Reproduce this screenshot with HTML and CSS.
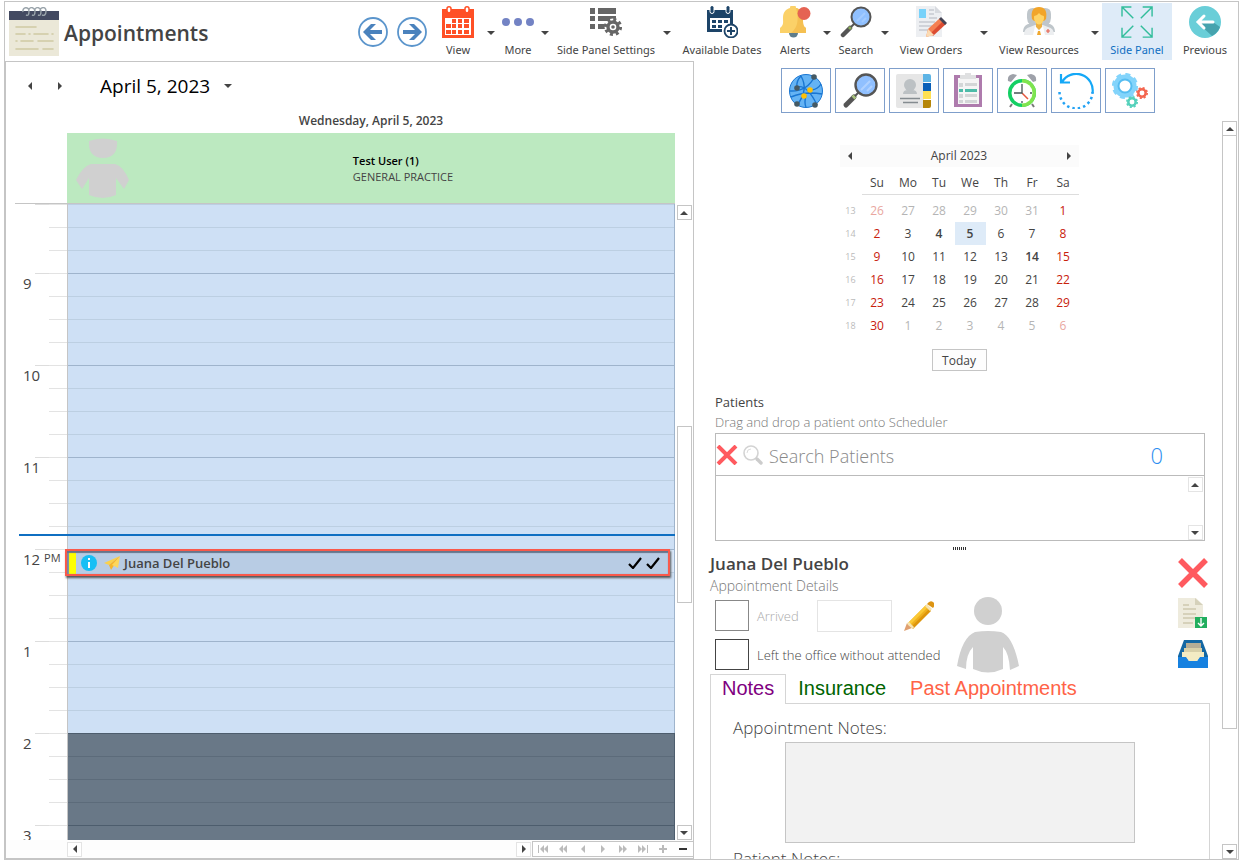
FILE: index.html
```html
<!DOCTYPE html>
<html lang="en">
<head>
<meta charset="utf-8">
<title>Appointments</title>
<link rel="stylesheet" href="styles.css">
</head>
<body>
<div class="app">
  <header class="header">
    <div class="brand">
      <svg class="brand-icon" viewBox="0 0 50 50" aria-hidden="true">
        <path fill="#ebe8d8" d="M0 4h50v45H0z"/><path fill="#434a61" d="M0 4h50v9H0z"/>
        <path fill="none" stroke="#9aa4ab" stroke-width="1.4" d="M14 5c-1-5 6-6 6-1 0 4-1 5-3 4M20 4c-1-4 5-5 6 0 0 4-1 5-3 4M26 4c-1-4 5-5 6 0 0 4-1 5-3 4M31 4c0-4 6-5 6 0 0 4-2 5-4 4"/>
        <path fill="none" stroke="#cfc9a3" stroke-width="1.6" stroke-linecap="round" d="M7 20h20M7 27h9M20 27h1M25 27h14M43 27h1M7 34h1M12 34h12M29 34h15M7 42h22M34 42h10"/>
      </svg>
      <h1>Appointments</h1>
    </div>
    <nav class="history">
      <button class="round" aria-label="Back"><svg viewBox="0 0 30 30"><circle cx="15" cy="15" r="14" fill="#fff" stroke="#5b95cc" stroke-width="1.8"/><path fill="none" stroke="#4a82bd" stroke-width="4" d="M24 15H8"/><path fill="#4a82bd" d="M5 15l8-8h5l-8 8 8 8h-5z"/></svg></button>
      <button class="round" aria-label="Forward"><svg viewBox="0 0 30 30"><circle cx="15" cy="15" r="14" fill="#fff" stroke="#5b95cc" stroke-width="1.8"/><path fill="none" stroke="#4a82bd" stroke-width="4" d="M6 15h16"/><path fill="#4a82bd" d="M25 15l-8-8h-5l8 8-8 8h5z"/></svg></button>
    </nav>
    <div class="toolbar">
      <button class="tool"><svg viewBox="0 0 32 32"><path fill="#ff5026" d="M0 3h32v29H0z"/><path fill="#fff" d="M3 12h26v17H3z"/><path fill="#ff5026" d="M10 13h4v4h-4zM16 13h4v4h-4zM22 13h5v4h-5zM4 18h5v4H4zM10 18h4v4h-4zM16 18h4v4h-4zM22 18h5v4h-5zM4 24h5v4H4zM10 24h4v4h-4zM16 24h4v4h-4zM22 24h5v4h-5z"/><g fill="#fff" stroke="#ff5026" stroke-width="1.500"><rect x="5" y=".8" width="4" height="6" rx="2"/><rect x="23" y=".8" width="4" height="6" rx="2"/></g></svg><span>View</span></button>
      <button class="caret" aria-label="View options"></button>
      <button class="tool"><svg viewBox="0 0 32 32"><g fill="#7383c4"><circle cx="4" cy="16" r="4"/><circle cx="16" cy="16" r="4"/><circle cx="28" cy="16" r="4"/></g></svg><span>More</span></button>
      <button class="caret" aria-label="More options"></button>
      <button class="tool"><svg viewBox="0 0 32 32"><path fill="#666" d="M0 2h5v6H0zM8 2h18v6H8zM0 10h5v5H0zM8 10h18v5H8zM0 18h5v5H0zM8 18h8v5H8z"/><circle cx="23" cy="21" r="8.500" fill="#fff"/><circle cx="23" cy="21" r="5" fill="none" stroke="#666" stroke-width="3.400"/><circle cx="23" cy="21" r="7.600" fill="none" stroke="#666" stroke-width="3" stroke-dasharray="3 2.969"/><circle cx="23" cy="21" r="1.800" fill="#666"/></svg><span>Side Panel Settings</span></button>
      <button class="caret" aria-label="Side panel settings options"></button>
      <button class="tool"><svg viewBox="0 0 32 32"><path fill="#1d4468" d="M1 4h26v16h-3v-8H4v11h12v3H1z"/><g fill="#1d4468" stroke="#fff"><rect x="4" y="-.5" width="4" height="8" rx="2"/><rect x="20" y="-.5" width="4" height="8" rx="2"/></g><path fill="#1d4468" d="M6 14h4v3H6zM12 14h4v3h-4zM18 14h4v3h-4zM6 19h4v3H6zM12 19h4v3h-4z"/><circle cx="25" cy="25" r="6.500" fill="#fff" stroke="#1d4468" stroke-width="1.800"/><path stroke="#1d4468" stroke-width="2" d="M21 25h8M25 21v8"/></svg><span>Available Dates</span></button>
      <button class="tool"><svg viewBox="0 0 32 32"><path fill="#5f7d8c" d="M10 27h9a4.500 4.500 0 0 1-9 0z"/><path fill="#fbd168" d="M11 2a3 3 0 0 1 6 0c5 1 7 5 7 10 0 6 0 8 3 10v5H1v-5c4-3 3-6 3-10C4 6 7 3 11 2z"/><path fill="#f5c052" d="M17 2c5 1 7 5 7 10 0 6 0 8 3 10v5H12q10-8 5-25z"/><circle cx="25" cy="7.500" r="6.500" fill="#e56353"/></svg><span>Alerts</span></button>
      <button class="caret" aria-label="Alerts options"></button>
      <button class="tool"><svg viewBox="0 0 32 32"><path stroke="#555" stroke-width="4.500" stroke-linecap="round" d="M3 29l7-7"/><path stroke="#8bab59" stroke-width="3" d="M9 23l2-2"/><path stroke="#555" stroke-width="2" d="M11 21l4-4"/><circle cx="21" cy="11" r="9.500" fill="#90c0ff" stroke="#555" stroke-width="2"/><path stroke="#a3cbff" stroke-width="2" d="M17 15l8-8M22 16l4-4"/></svg><span>Search</span></button>
      <button class="caret" aria-label="Search options"></button>
      <button class="tool"><svg viewBox="0 0 32 32"><path fill="#edeff2" d="M1 0h19l7 7v24H1z"/><path fill="#d7dadf" d="M20 0v7h7z"/><path fill="#78d2fa" d="M4 3h7v9H4z"/><path stroke="#c6cad1" stroke-width="1.500" d="M14 4h5M14 8h5M14 12h8M4 16h16M4 20h13M4 24h10"/><path fill="#f58053" d="M11 31l2-8 12-11 5 5-12 12z"/><path fill="#dc4c32" d="M16 27L28 15l3 3-13 12z"/><path fill="#fbdbb3" d="M11 31l2-8 6 6z"/><path fill="#445" d="M24 13l2-2 6 6-2 2z"/></svg><span>View Orders</span></button>
      <button class="caret" aria-label="View orders options"></button>
      <button class="tool"><svg viewBox="0 0 32 32"><g fill="#bfc6cb"><path d="M4 8q0-6 6-6t6 6v4q0 4-4 7H7q-3-3-3-7zM16 8q0-6 6-6t6 6v4q0 4-3 7h-5q-4-3-4-7z"/><path d="M0 26q0-6 5-8h22q5 2 5 8z"/></g><path fill="#eceef0" d="M1 29q0-7 6-8l5-2h8l5 2q6 1 6 8z"/><path fill="#f2a52a" d="M9 13Q7 1 16 1t7 12l-2 2H11z"/><path fill="#eeb040" d="M13 16h6v5l-3 3-3-3z"/><ellipse cx="16" cy="12" rx="5" ry="6.500" fill="#ffd466"/><path fill="#f2a52a" d="M10 10q0-6 6-6t6 6q-4 0-6-3-2 3-6 3z"/><path fill="#fff" d="M12 20l4 5 4-5 2 9H10z"/><path fill="#f0a830" d="M15 25h2l1 4h-4z"/><path stroke="#e86352" stroke-width="1.200" d="M25 23v4M23 25h4"/></svg><span>View Resources</span></button>
      <button class="caret caret-end" aria-label="View resources options"></button>
      <button class="tool active"><svg viewBox="0 0 32 32"><path fill="none" stroke="#31bd9b" stroke-width="1.500" d="M0 10V0h10M0 0l12 12M22 0h10v10M32 0L20 12M0 22v10h10M0 32l12-12M22 32h10V22M32 32L20 20" transform="translate(1 1) scale(.94)"/></svg><span>Side Panel</span></button>
      <button class="tool"><svg viewBox="0 0 32 32"><circle cx="16" cy="16" r="16" fill="#69ced8"/><path fill="#46a3ae" d="M9 17l14 13a16 16 0 0 0 8-9l-7-5z"/><path fill="none" stroke="#fff" stroke-width="3" stroke-linecap="round" d="M24 16H10M15 10l-6 6 6 6"/></svg><span>Previous</span></button>
    </div>
  </header>

  <main class="main">
    <section class="schedule">
      <div class="date-nav">
        <button class="arrow-btn left" aria-label="Previous day"></button>
        <button class="arrow-btn right" aria-label="Next day"></button>
        <button class="date-pick">April 5, 2023 <i class="tri down"></i></button>
      </div>
      <h2 class="day-title">Wednesday, April 5, 2023</h2>
      <div class="resource">
        <svg class="resource-avatar" viewBox="0 0 53 62" aria-hidden="true"><path fill="#d0d0d0" d="M13 4Q27-1 41 4q1 17-14 17T13 4zM15 27h24q8 2 14 16l-5 9-8-11v17q-13 6-27 0V41L6 52 0 43q7-14 15-16z"/></svg>
        <div class="resource-text"><strong>Test User (1)</strong><span>GENERAL PRACTICE</span></div>
      </div>
      <div class="timeline">
        <div class="hours">
          <div class="hour partial"><div class="label"></div><div class="slots"><i></i><i></i><i></i></div></div>
          <div class="hour"><div class="label">9</div><div class="slots"><i></i><i></i><i></i><i></i></div></div>
          <div class="hour"><div class="label">10</div><div class="slots"><i></i><i></i><i></i><i></i></div></div>
          <div class="hour now"><div class="label">11</div><div class="slots"><i></i><i></i><i></i><i></i></div></div>
          <div class="hour"><div class="label">12 <small>PM</small></div><div class="slots"><i class="picked"></i><i></i><i></i><i></i></div>
            <button class="event">
              <svg class="ev-info" viewBox="0 0 16 16"><circle cx="8" cy="8" r="8" fill="#17bff5"/><path stroke="#fff" stroke-width="2" d="M8 7v6M8 3v2"/></svg>
              <svg class="ev-plane" viewBox="0 0 16 14"><path fill="#fbd14b" d="M16 0L0 7l5 2z"/><path fill="#f5b52a" d="M16 0L5 9l2 5 2-3z"/><path fill="#fcd65c" d="M16 0L8 9l6 3z"/></svg>
              <span class="ev-name">Juana Del Pueblo</span>
              <svg class="ev-check" viewBox="0 0 14 12"><path fill="none" stroke="#000" stroke-width="2.200" d="M1 7l4 4L13 1"/></svg>
              <svg class="ev-check" viewBox="0 0 14 12"><path fill="none" stroke="#000" stroke-width="2.200" d="M1 7l4 4L13 1"/></svg>
            </button>
          </div>
          <div class="hour"><div class="label">1</div><div class="slots"><i></i><i></i><i></i><i></i></div></div>
          <div class="hour closed"><div class="label">2</div><div class="slots"><i></i><i></i><i></i><i></i></div></div>
          <div class="hour closed"><div class="label">3</div><div class="slots"><i></i><i></i><i></i><i></i></div></div>
        </div>
        <div class="vbar">
          <button class="sb" aria-label="Scroll up"><i class="tri up"></i></button>
          <div class="track track-day"><div class="thumb"></div></div>
          <button class="sb" aria-label="Scroll down"><i class="tri down"></i></button>
        </div>
      </div>
      <div class="hbar">
        <button class="sb soft" aria-label="Scroll left"><i class="tri left"></i></button>
        <button class="sb soft push" aria-label="Scroll right"><i class="tri right"></i></button>
        <div class="pager">
          <button aria-label="First"><svg viewBox="0 0 12 10"><path d="M1 1h1v8H1zM7 1v8L3 5zM11 1v8L7 5z"/></svg></button>
          <button aria-label="Previous page"><svg viewBox="0 0 12 10"><path d="M6 1v8L2 5zM10 1v8L6 5z"/></svg></button>
          <button aria-label="Previous resource"><svg viewBox="0 0 12 10"><path d="M8 1v8L4 5z"/></svg></button>
          <button aria-label="Next resource"><svg viewBox="0 0 12 10"><path d="M4 1v8l4-4z"/></svg></button>
          <button aria-label="Next page"><svg viewBox="0 0 12 10"><path d="M2 1v8l4-4zM6 1v8l4-4z"/></svg></button>
          <button aria-label="Last"><svg viewBox="0 0 12 10"><path d="M1 1v8l4-4zM5 1v8l4-4zM10 1h1v8h-1z"/></svg></button>
          <button aria-label="Add"><svg viewBox="0 0 12 10"><path d="M2 4h8v2H2zM5 1h2v8H5z"/></svg></button>
          <button class="on" aria-label="Remove"><svg viewBox="0 0 12 10"><path d="M2 4h8v2H2z"/></svg></button>
        </div>
      </div>
    </section>

    <aside class="side">
      <div class="side-tools">
        <button aria-label="Network"><svg viewBox="0 0 36 36"><circle cx="18" cy="18" r="16.500" fill="#64b3f4" stroke="#1976d2"/><path fill="none" stroke="#1976d2" stroke-width="1.400" d="M2 18q17 1 25-15M9 14q10-3 20 18M3 24q14-6 31-3M13 3q8 14-4 29M24 17q6-1 9-6M9 14Q8 8 13 3M18 22q-2 8 0 12"/><g fill="#455a64"><circle cx="26" cy="4" r="2.800"/><circle cx="9" cy="15" r="2.800"/><circle cx="9" cy="31" r="2.800"/><circle cx="27" cy="32" r="2.800"/></g><g fill="#ffc107"><circle cx="22" cy="17" r="2.800"/><circle cx="16" cy="23" r="2.800"/></g></svg></button>
        <button aria-label="Find"><svg viewBox="0 0 36 36"><path stroke="#555" stroke-width="5" stroke-linecap="round" d="M4 32l8-8"/><path stroke="#a9c37d" stroke-width="4" d="M11 25l2-2"/><path stroke="#555" stroke-width="2" d="M13 23l5-5"/><circle cx="24" cy="12" r="10.500" fill="#90c0ff" stroke="#555" stroke-width="2.400"/><path stroke="#b0d1ff" stroke-width="2" d="M19 17l9-9M25 18l5-5"/></svg></button>
        <button aria-label="Contacts"><svg viewBox="0 0 36 36"><rect x="0" y="1" width="28" height="34" rx="2" fill="#e6e6e6"/><path fill="#5db4e5" d="M27 1h6q2 0 2 2v6h-8z"/><path fill="#0a5fb8" d="M27 10h8v8h-8z"/><path fill="#ffe053" d="M27 18h8v8h-8z"/><path fill="#b58609" d="M27 27h8v6q0 2-2 2h-6z"/><circle cx="14" cy="12" r="6" fill="#bcc1c4"/><path fill="#bcc1c4" d="M7 21q0-4 5-4h4q5 0 5 4z"/><path stroke="#848b90" stroke-width="1.300" d="M4 25.500h20M7 29.500h15"/></svg></button>
        <button aria-label="Task list"><svg viewBox="0 0 36 36"><path fill="#ae7bad" d="M4 2h28v32H4z"/><path fill="#f5f5f5" d="M8 5h21v26H8z"/><path fill="#dfe0e1" d="M10 2h5V0h6v2h5v4H10z"/><path fill="#d3d6d7" d="M9 10h4v4H9zM15 10h12v3H15zM9 21h4v4H9zM15 21h12v3H15zM9 27h4v3H9zM15 27h12v3H15z"/><path fill="#4dbba8" d="M9 16h4v3H9zM15 16h12v3H15z"/></svg></button>
        <button aria-label="Reminders"><svg viewBox="0 0 36 36"><path fill="#9ea1a9" d="M4 8Q3 2 9 1l4 1-6 7zM32 8q1-6-5-7l-4 1 6 7z"/><path stroke="#777" stroke-width="2" d="M8 31l-2 3M28 31l2 3"/><circle cx="18" cy="20" r="14" fill="#13cf63"/><path fill="#7fe44f" d="M18 6a14 14 0 0 1 0 28z"/><circle cx="18" cy="20" r="10.500" fill="#fff"/><path stroke="#e5573e" stroke-width="1.500" d="M18 20l6 6"/><path fill="none" stroke="#455" stroke-width="1.300" d="M18 11v9h-8M26 20h2M18 28v2"/></svg></button>
        <button aria-label="Refresh"><svg viewBox="0 0 36 36"><path fill="none" stroke="#14a8f7" stroke-width="2.200" d="M34.500 20A16.500 16.500 0 0 0 4 9M3 1v8.500h9"/><path fill="none" stroke="#22a2f4" stroke-width="2.500" stroke-dasharray="2.500 3" d="M1.500 19a16.500 16.500 0 0 0 33 0"/></svg></button>
        <button aria-label="Settings"><svg viewBox="0 0 36 36"><circle cx="13" cy="13" r="8.500" fill="none" stroke="#83d4fb" stroke-width="6"/><circle cx="13" cy="13" r="11.600" fill="none" stroke="#83d4fb" stroke-width="3" stroke-dasharray="5 4.110"/><circle cx="13" cy="13" r="6.500" fill="#fff" stroke="#56bdf1" stroke-width="2"/><circle cx="30" cy="20" r="3.700" fill="none" stroke="#f4664f" stroke-width="2.500"/><circle cx="30" cy="20" r="5.200" fill="none" stroke="#f4664f" stroke-width="1.600" stroke-dasharray="2.100 1.984"/><circle cx="20" cy="29" r="3.700" fill="none" stroke="#55d1bb" stroke-width="2.500"/><circle cx="20" cy="29" r="5.200" fill="none" stroke="#55d1bb" stroke-width="1.600" stroke-dasharray="2.100 1.984"/></svg></button>
      </div>
      <div class="side-body">
        <div class="side-content">
          <div class="calendar">
            <div class="cal-head"><button class="arrow-btn left" aria-label="Previous month"></button><span>April 2023</span><button class="arrow-btn right" aria-label="Next month"></button></div>
            <table>
              <thead><tr><td></td><th>Su</th><th>Mo</th><th>Tu</th><th>We</th><th>Th</th><th>Fr</th><th>Sa</th></tr></thead>
              <tbody>
                <tr><th>13</th><td class="out">26</td><td class="out">27</td><td class="out">28</td><td class="out">29</td><td class="out">30</td><td class="out">31</td><td>1</td></tr>
                <tr><th>14</th><td>2</td><td>3</td><td class="busy">4</td><td class="busy today">5</td><td>6</td><td>7</td><td>8</td></tr>
                <tr><th>15</th><td>9</td><td>10</td><td>11</td><td>12</td><td>13</td><td class="busy">14</td><td>15</td></tr>
                <tr><th>16</th><td>16</td><td>17</td><td>18</td><td>19</td><td>20</td><td>21</td><td>22</td></tr>
                <tr><th>17</th><td>23</td><td>24</td><td>25</td><td>26</td><td>27</td><td>28</td><td>29</td></tr>
                <tr><th>18</th><td>30</td><td class="out">1</td><td class="out">2</td><td class="out">3</td><td class="out">4</td><td class="out">5</td><td class="out">6</td></tr>
              </tbody>
            </table>
            <button class="today-btn">Today</button>
          </div>

          <section class="patients">
            <label class="patients-title" for="search">Patients</label>
            <p class="hint">Drag and drop a patient onto Scheduler</p>
            <div class="search">
              <button class="clear" aria-label="Clear search"><svg viewBox="0 0 20 20"><path stroke="#ff5a5f" stroke-width="4" d="M1 1l18 18M19 1L1 19"/></svg></button>
              <svg class="search-icon" viewBox="0 0 20 20"><circle cx="8" cy="8" r="7" fill="#fff" stroke="#d3d3d3" stroke-width="1.600"/><path fill="none" stroke="#dcdcdc" d="M4 8a4 4 0 0 1 4-4"/><path stroke="#ccc" stroke-width="3.400" stroke-linecap="round" d="M14 14l4 4"/></svg>
              <input id="search" type="text" placeholder="Search Patients">
              <output class="count">0</output>
            </div>
            <div class="results">
              <div class="vbar">
                <button class="sb soft" aria-label="Scroll up"><i class="tri up"></i></button>
                <button class="sb soft push-down" aria-label="Scroll down"><i class="tri down"></i></button>
              </div>
            </div>
          </section>
          <div class="splitter"></div>

          <section class="details">
            <div class="fields">
              <h2>Juana Del Pueblo</h2>
              <p class="hint">Appointment Details</p>
              <div class="field muted">
                <input type="checkbox" id="arrived" disabled><label for="arrived">Arrived</label>
                <input type="text" class="arrival" aria-label="Arrival time" disabled>
                <button class="edit" aria-label="Edit"><svg viewBox="0 0 30 30"><path fill="#eeb01f" d="M4 22L22 4l5 5L9 27z"/><path fill="#fbc936" d="M4 22L22 4l2 2L6 24z"/><path fill="#de950b" d="M7 26L25 8l2 2L9 28z"/><path fill="#e0a070" d="M0 30l3-8 5 5z"/><path fill="#f7e4b0" d="M3 22l2-1 5 5-1 2-5-4zM21 5l2-2 5 5-2 2z"/><path fill="#dd9412" d="M23 3q3-4 6-2t0 6z"/></svg></button>
              </div>
              <div class="field">
                <input type="checkbox" id="left"><label for="left">Left the office without attended</label>
              </div>
            </div>
            <svg class="avatar" viewBox="0 0 62 76" aria-hidden="true"><circle cx="31" cy="14" r="14" fill="#d0d0d0"/><path fill="#d0d0d0" d="M18 35q13-2 26 0 12 4 18 34l-9 4q-1-17-7-23v22q-15 7-30 0V50q-7 7-7 22l-9-3Q5 40 18 35z"/></svg>
            <div class="actions">
              <button aria-label="Delete"><svg viewBox="0 0 30 30"><path stroke="#ff5a5f" stroke-width="5.500" d="M2 2l26 26M28 2L2 28"/></svg></button>
              <button aria-label="Download"><svg viewBox="0 0 30 30"><path fill="#eeebdd" d="M0 0h18l7 7v23H0z"/><path fill="#d5d1bb" d="M17 0v7h8z"/><path stroke="#cec9ae" stroke-width="1.300" d="M5 7h6M5 11h13M5 16h13M5 20h13M5 25h10"/><path fill="#21ae5e" d="M17 19h12v11H17z"/><path fill="none" stroke="#fff" stroke-width="1.400" d="M23 20v8M20 25l3 3 3-3"/></svg></button>
              <button aria-label="Archive"><svg viewBox="0 0 30 30"><path fill="#1367a3" d="M6 2h18l6 16v4H0v-4z"/><path fill="#b5ad96" d="M8 5h15v5H8z"/><path fill="#d8d0a9" d="M6 10h18v5H6z"/><path fill="#f3ebc3" d="M4 14h22v8H4z"/><path fill="#1681e0" d="M0 19h8l3 4h8l3-4h8v11H0z"/><path fill="#f3ebc3" d="M8 18h14l-3 5h-8z"/></svg></button>
            </div>
          </section>

          <div class="tabs" role="tablist">
            <button class="tab notes" role="tab" aria-selected="true">Notes</button>
            <button class="tab insurance" role="tab">Insurance</button>
            <button class="tab past" role="tab">Past Appointments</button>
          </div>
          <div class="tab-panel" role="tabpanel">
            <label for="appt-notes">Appointment Notes:</label>
            <textarea id="appt-notes"></textarea>
            <label for="patient-notes">Patient Notes:</label>
            <textarea id="patient-notes"></textarea>
          </div>
        </div>
        <div class="vbar side-bar">
          <button class="sb" aria-label="Scroll up"><i class="tri up"></i></button>
          <div class="track track-side"><div class="thumb"></div></div>
          <button class="sb" aria-label="Scroll down"><i class="tri down"></i></button>
        </div>
      </div>
    </aside>
  </main>
</div>
</body>
</html>
```
FILE: styles.css
```css
* { box-sizing: border-box; }
body {
  margin: 0;
  background: #fff;
  color: #444;
  font: 11px/16px "Open Sans", "Noto Sans", sans-serif;
}
button, input, textarea { font: inherit; color: inherit; }
button { margin: 0; padding: 0; border: 0; background: none; border-radius: 0; }
h1, h2, p { margin: 0; }
svg { display: block; }

.app {
  display: flex;
  flex-direction: column;
  height: 100vh;
  padding: 1px 4px 5px;
}
.header, .main { border: 1px solid #c5c5c5; }

/* Header */
.header {
  display: flex;
  flex: none;
  height: 60px;
  border-bottom: 0;
}
.brand { display: flex; align-items: center; gap: 5px; padding-left: 4px; margin-right: auto; }
.brand-icon { width: 50px; height: 50px; }
.brand h1 { padding-top: 3px; font-size: 21px; line-height: 30px; font-weight: 600; }
.history { display: flex; align-items: center; gap: 9px; margin-right: 5px; }
.round svg { width: 30px; height: 30px; }
.toolbar {
  display: grid;
  grid-template-columns: 52px 14px 40px 14px 108px 14px 96px 50px 14px 44px 14px 78px 28px 82px 22px 70px 66px;
  font-family: "Noto Sans", "Open Sans", sans-serif;
}
.tool {
  display: flex;
  flex-direction: column;
  align-items: center;
  gap: 4px;
  padding-top: 3px;
  margin: 1px 0;
  white-space: nowrap;
}
.tool svg { width: 32px; height: 32px; }
.tool.active { background: #deebf8; color: #0f6fc2; }
.caret::before {
  content: "";
  display: block;
  width: 0;
  margin: 2px auto 0;
  border: 4px solid transparent;
  border-top-color: #444;
  border-bottom: 0;
}
.caret { width: 14px; justify-self: center; }
.caret-end { justify-self: end; }

/* Arrow glyphs */
.tri, .arrow-btn::before {
  content: "";
  display: block;
  width: 0;
  height: 0;
  border: 4px solid transparent;
}
.tri.up { border-bottom-color: #444; border-top: 0; }
.tri.down { border-top-color: #444; border-bottom: 0; }
.tri.left, .arrow-btn.left::before { border-right-color: #444; border-left: 0; }
.tri.right, .arrow-btn.right::before { border-left-color: #444; border-right: 0; }
.arrow-btn { display: grid; place-items: center; width: 20px; height: 20px; }

/* Main split */
.main { display: flex; flex: 1; min-height: 0; border-top: 0; }
.schedule {
  display: flex;
  flex: 1;
  flex-direction: column;
  min-width: 0;
  border: 1px solid #c5c5c5;
}
.date-nav { display: flex; align-items: center; gap: 10px; height: 48px; padding-left: 14px; }
.date-pick {
  display: flex;
  align-items: center;
  gap: 14px;
  margin-left: 20px;
  color: #000;
  font-size: 19px;
  line-height: 28px;
}
.day-title {
  padding: 3px 18px 4px 61px;
  text-align: center;
  font-size: 12px;
  line-height: 16px;
  font-weight: 600;
}
.resource {
  display: flex;
  justify-content: center;
  align-items: center;
  position: relative;
  height: 70px;
  margin: 0 18px 0 61px;
  background: #bce9c0;
  padding: 2px 0 0 64px;
}
.resource-avatar { position: absolute; left: 9px; top: 4px; width: 53px; height: 62px; }
.resource-text { display: flex; flex-direction: column; }
.resource-text strong { color: #000; font-weight: 600; }

.timeline { display: flex; flex: 1; min-height: 0; position: relative; }
.timeline::before {
  content: "";
  position: absolute;
  left: 9px;
  right: 18px;
  border-top: 1px solid #c5c5c5;
  z-index: 1;
}
.hours { flex: 1; overflow: hidden; padding-top: 1px; }
.hour { display: grid; grid-template-columns: 61px 1fr; position: relative; }
.label {
  padding-left: 17px;
  font-size: 15px;
  line-height: 20px;
  white-space: nowrap;
  background: repeating-linear-gradient(#e3e3e3 0 1px, transparent 1px 23px) right / 18px 100% no-repeat,
    linear-gradient(#ddd 0 0) right top / 32px 1px no-repeat;
}
.label small { font-size: 11px; font-weight: 400; vertical-align: 3px; line-height: 1; }
.slots { border-left: 1px solid #c5c5c5; border-right: 1px solid #9fb4cc; background: #cee0f5; }
.slots i { display: block; height: 23px; border-top: 1px solid #bccfe2; }
.slots i:first-child { border-top-color: #9fb4cc; }
.slots .picked { background: #d9e8fa; }
.partial .slots i:first-child { border-top-color: #bccfe2; }
.closed .slots { background: #697887; border-right-color: #4d5d6d; }
.closed .slots i { border-top-color: #5c6b7a; }
.closed .slots i:first-child { border-top-color: #4d5d6d; }
.now::after {
  content: "";
  position: absolute;
  left: 13px;
  right: 0;
  top: 77px;
  border-top: 2px solid #0f6fc2;
}
.event {
  position: absolute;
  z-index: 2;
  left: 59px;
  right: 5px;
  top: 0;
  display: flex;
  align-items: center;
  gap: 4px;
  height: 27px;
  padding: 1px 8px 0 14px;
  border: 2px solid #f9594b;
  background: linear-gradient(#ff0 0 0) 2px 0 / 7px 100% no-repeat #b8cce4;
  box-shadow: 1px 2px 2px #555, inset 0 2px 1px #66758a, inset 2px 0 1px #7d8ba0;
}
.ev-info { width: 16px; height: 16px; }
.ev-plane { width: 16px; height: 14px; margin-left: 3px; }
.ev-name { margin-right: auto; font-size: 13px; font-weight: 600; }
.ev-check { width: 14px; height: 12px; }

/* Scroll bars */
.vbar { display: flex; flex-direction: column; flex: none; align-items: center; width: 18px; padding: 2px 0 0; }
.sb {
  display: grid;
  place-items: center;
  flex: none;
  width: 15px;
  height: 15px;
  border: 1px solid #c5c5c5;
  background: #fff;
}
.sb.soft { border-color: #e4e4e4; }
.track { display: flex; flex-direction: column; flex: 1; width: 15px; }
.thumb { border: 1px solid #c5c5c5; background: #fff; }
.track-day::before { content: ""; flex: 207; }
.track-day .thumb { flex: 175; }
.track-day::after { content: ""; flex: 223; }
.track-side .thumb { flex: 593; border-top: 0; }
.track-side::after { content: ""; flex: 115; }
.hbar { display: flex; align-items: center; gap: 1px; height: 18px; padding-left: 61px; background: #fdfdfd; }
.hbar .push { margin-left: auto; }
.pager {
  display: flex;
  justify-content: space-around;
  align-items: center;
  width: 161px;
  height: 16px;
  border: 1px solid #c5c5c5;
  border-right: 0;
  background: #fff;
}
.pager svg { width: 12px; height: 10px; fill: #bbb; }
.pager .on svg { fill: #333; }

/* Side panel */
.side { display: flex; flex-direction: column; flex: none; width: 544px; }
.side-tools { display: flex; justify-content: center; gap: 4px; padding: 7px 0 8px 4px; }
.side-tools button {
  display: grid;
  place-items: center;
  width: 50px;
  height: 45px;
  border: 1px solid #7f9fcb;
}
.side-tools svg { width: 36px; height: 36px; }
.side-body { display: flex; flex: 1; min-height: 0; }
.side-content { flex: 1; overflow: hidden; padding: 24px 12px 0 16px; }
.vbar.side-bar { width: 16px; padding: 0; align-items: flex-start; }

.calendar { display: flex; flex-direction: column; align-items: center; padding-right: 2px; font-size: 12px; }
.cal-head {
  display: flex;
  justify-content: space-between;
  align-items: center;
  width: 239px;
  height: 22px;
  background: #fbfbfb;
}
.calendar table { width: 239px; table-layout: fixed; border-collapse: collapse; text-align: center; }
.calendar th { padding: 0; font-weight: 400; }
.calendar td { padding: 0; height: 23px; }
.calendar tr > :first-child { width: 22px; }
.calendar thead th { height: 27px; border-bottom: 1px solid #ddd; padding-top: 5px; }
.calendar tbody::before { content: ""; display: block; height: 5px; }
.calendar tbody th { font-size: 9px; color: #bbb; }
.calendar tbody td:nth-child(2), .calendar tbody td:last-child { color: #c8200c; }
.calendar tbody td.out { color: #b5b5b5; }
.calendar tbody td.out:nth-child(2), .calendar tbody td.out:last-child { color: #e9a79f; }
.calendar .busy { font-weight: 600; }
.calendar .today { background: #deebf8; }
.today-btn { width: 55px; height: 22px; padding-top: 2px; margin-top: 12px; border: 1px solid #c5c5c5; background: #fdfdfd; line-height: 18px; }

.patients { padding: 0 5px; margin-top: 21px; }
.patients-title { display: block; font-size: 13px; line-height: 20px; }
.hint { font-size: 13px; line-height: 20px; font-weight: 300; color: #777; }
.search { display: flex; align-items: center; height: 43px; margin-top: 1px; border: 1px solid #bbb; }
.clear svg { width: 22px; height: 20px; }
.search-icon { width: 20px; height: 20px; margin: 0 6px 0 5px; }
.search input {
  flex: 1;
  min-width: 0;
  height: 36px;
  padding: 2px 0 0;
  border: 0;
  outline: 0;
  font-size: 18px;
  font-weight: 300;
}
.search input::placeholder { color: #888; opacity: 1; }
.count { padding-right: 41px; color: #2b8df0; font-size: 22px; line-height: 36px; font-weight: 300; }
.results { display: flex; justify-content: flex-end; height: 65px; border: 1px solid #bbb; border-top: 0; }
.results .vbar { padding-top: 1px; }
.push-down { margin-top: auto; }
.splitter {
  width: 14px;
  height: 3px;
  margin: 6px auto 3px;
  background: repeating-linear-gradient(90deg, #333 0 1px, transparent 1px 2px);
}

.details { display: flex; height: 121px; }
.fields { width: 247px; }
.fields h2 { font-size: 17px; line-height: 22px; font-weight: 600; }
.fields .hint { font-size: 14px; line-height: 21px; }
.field { display: flex; align-items: center; height: 39px; padding-left: 5px; font-size: 13px; font-weight: 300; }
.field label { margin-left: 8px; white-space: nowrap; }
.field.muted { color: #aaa; }
.field input[type="checkbox"] {
  appearance: none;
  flex: none;
  width: 34px;
  height: 31px;
  margin: 0;
  border: 1px solid #444;
  background: #fff;
}
.field.muted input[type="checkbox"] { border-color: #888; }
.field .arrival { width: 75px; height: 32px; margin-left: 18px; border: 1px solid #e4e4e4; background: #fff; }
.edit { margin-left: 12px; }
.edit svg { width: 30px; height: 30px; }
.avatar { width: 62px; height: 76px; margin-top: 44px; }
.actions { display: flex; flex-direction: column; gap: 10px; margin: 5px 2px 0 auto; }
.actions svg { width: 30px; height: 30px; }

.tabs { display: flex; font: 20px/26px "Liberation Sans", Arial, sans-serif; }
.tab { display: flex; position: relative; height: 29px; padding: 0 11px; border: 1px solid transparent; border-bottom: 0; }
.tab.notes { border-color: #d5d5d5; background: #fff; color: purple; margin-bottom: -1px; height: 30px; z-index: 1; }
.tab.insurance { color: #006400; }
.tab.past { color: #ff6347; }
.tab-panel { padding: 14px 22px 0; border: 1px solid #d5d5d5; }
.tab-panel label { display: block; font-size: 17px; line-height: 20px; font-weight: 300; }
.tab-panel textarea {
  display: block;
  width: 350px;
  max-width: 100%;
  height: 101px;
  margin: 4px auto 6px;
  border: 1px solid #c5c5c5;
  background: #f2f2f2;
  resize: none;
}
```
